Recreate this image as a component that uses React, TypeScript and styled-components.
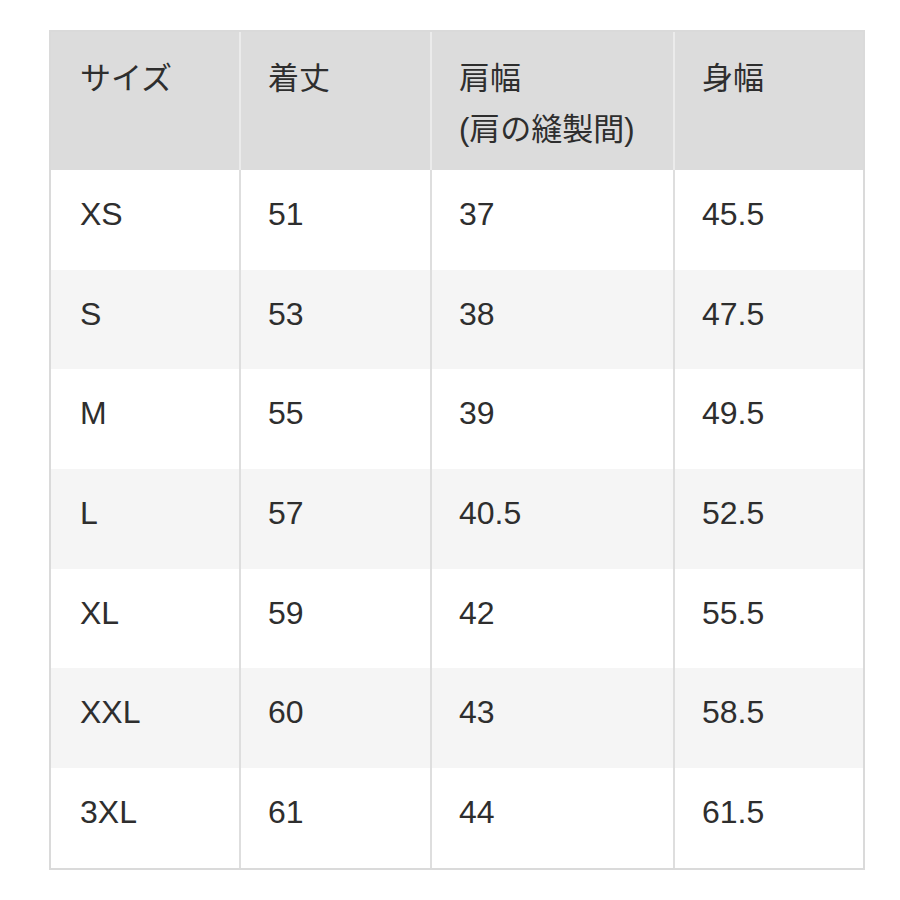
import styled, { createGlobalStyle } from "styled-components";

const GlobalStyle = createGlobalStyle`
  html, body {
    margin: 0;
    padding: 0;
    background: #ffffff;
  }
  body {
    font-family: "Liberation Sans", "Noto Sans CJK JP", sans-serif;
    color: #2e2e2e;
  }
`;

const headers = ["サイズ", "着丈", "肩幅\n(肩の縫製間)", "身幅"];

const rows = [
  ["XS", "51", "37", "45.5"],
  ["S", "53", "38", "47.5"],
  ["M", "55", "39", "49.5"],
  ["L", "57", "40.5", "52.5"],
  ["XL", "59", "42", "55.5"],
  ["XXL", "60", "43", "58.5"],
  ["3XL", "61", "44", "61.5"],
];

const App = () => {
  return (
    <>
      <GlobalStyle />
      <Page>
        <SizeTable>
          <HeaderRow>
            {headers.map((h, i) => (
              <HeaderCell key={h} $first={i === 0}>
                {h.split("\n").map((line) => (
                  <HeaderLine key={line}>{line}</HeaderLine>
                ))}
              </HeaderCell>
            ))}
          </HeaderRow>
          {rows.map((row, r) => (
            <BodyRow key={row[0]} $striped={r % 2 === 1}>
              {row.map((cell, i) => (
                <BodyCell key={i} $first={i === 0}>
                  {cell}
                </BodyCell>
              ))}
            </BodyRow>
          ))}
        </SizeTable>
      </Page>
    </>
  );
};

const Page = styled.div`
  padding: 30px 35px 30px 49px;
`;

const SizeTable = styled.div`
  width: 816px;
  border: 2px solid #dadada;
  box-sizing: border-box;
  display: flex;
  flex-direction: column;
`;

const HeaderRow = styled.div`
  display: grid;
  grid-template-columns: 188px 191px 243px 1fr;
  height: 138px;
  background: #dcdcdc;
`;

const HeaderCell = styled.div<{ $first: boolean }>`
  display: flex;
  flex-direction: column;
  padding: 21px 0 0 ${(p) => (p.$first ? "29px" : "27px")};
  border-left: ${(p) => (p.$first ? "none" : "2px solid #ebebeb")};
  font-size: 31px;
`;

const HeaderLine = styled.span`
  line-height: 51px;
`;

const BodyRow = styled.div<{ $striped: boolean }>`
  display: grid;
  grid-template-columns: 188px 191px 243px 1fr;
  height: 99.7px;
  background: ${(p) => (p.$striped ? "#f5f5f5" : "#ffffff")};
`;

const BodyCell = styled.div<{ $first: boolean }>`
  display: flex;
  align-items: center;
  padding: 0 0 11px ${(p) => (p.$first ? "29px" : "27px")};
  border-left: ${(p) => (p.$first ? "none" : "2px solid #dedede")};
  font-size: 32px;
`;

export default App;
